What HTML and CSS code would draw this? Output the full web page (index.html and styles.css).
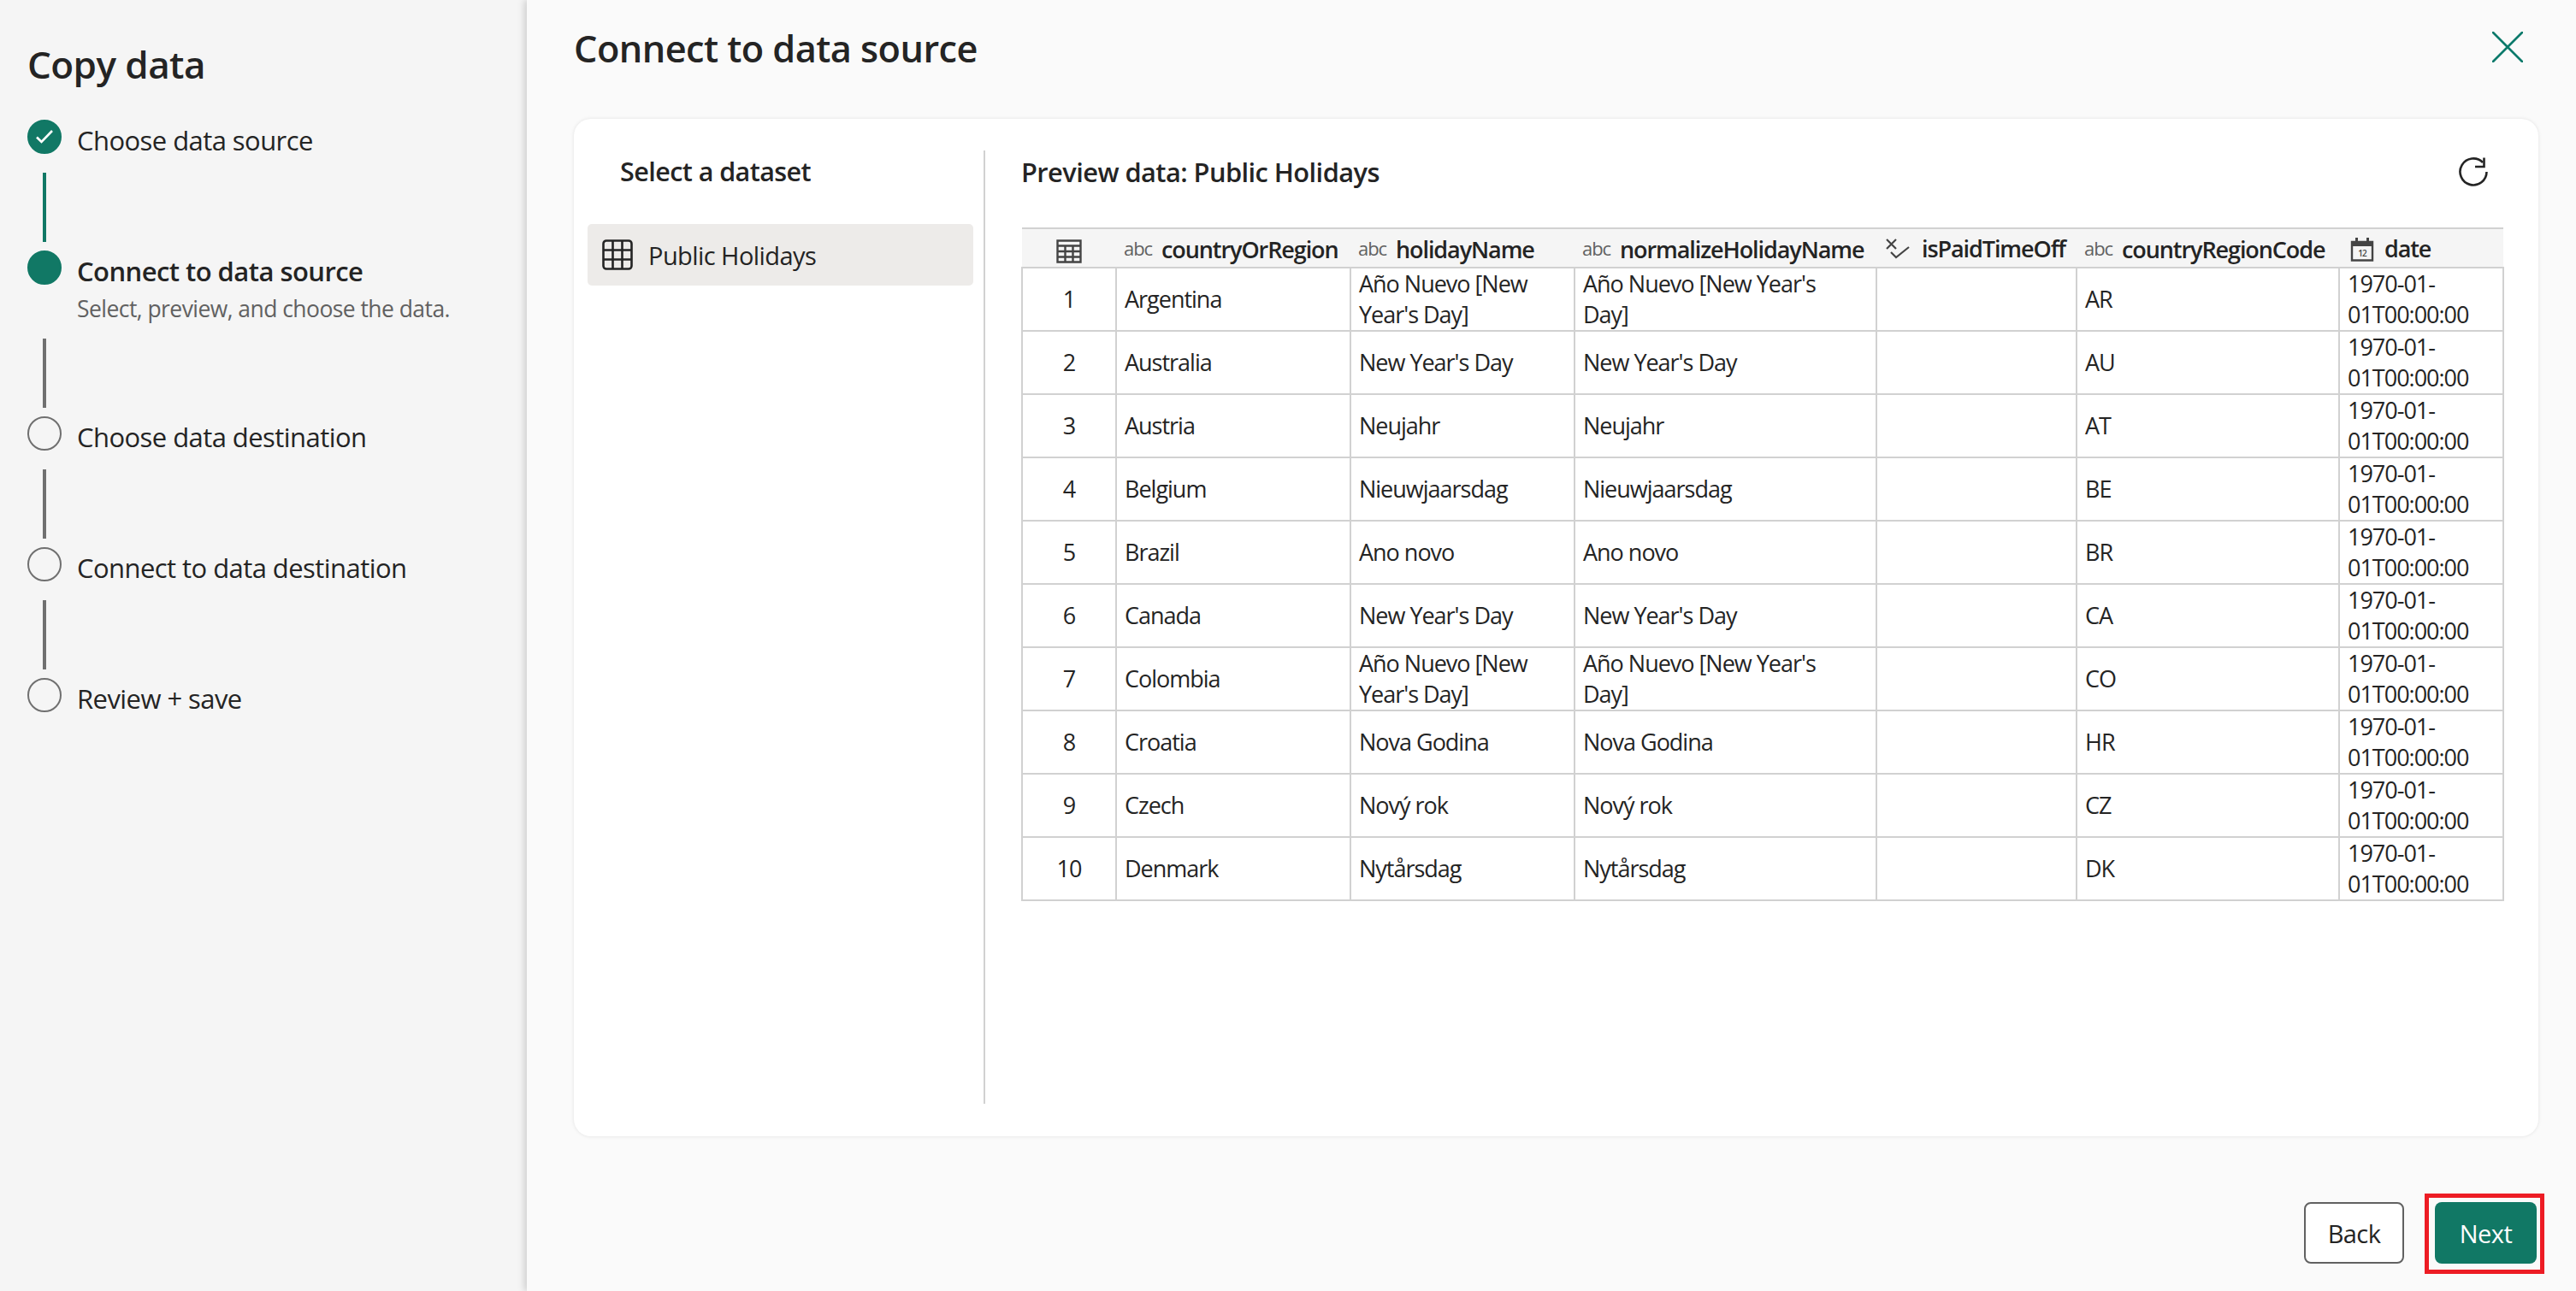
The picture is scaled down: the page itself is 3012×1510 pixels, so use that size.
FILE: index.html
```html
<!DOCTYPE html>
<html lang="en">
<head>
    <meta charset="UTF-8">
    <title>Copy data</title>
    <link rel="stylesheet" href="styles.css">
</head>
<body>
    <aside class="sidebar">
        <h1>Copy data</h1>
        <div class="step done">
            <div class="rail">
                <span class="dot">
                    <svg viewBox="0 0 24 24" width="24" height="24"><path d="M3 12.500l5.500 5.500L21 5" fill="none" stroke="#fff" stroke-width="2.600"/></svg>
                </span>
                <span class="line"></span>
            </div>
            <div class="step-text">Choose data source</div>
        </div>
        <div class="step current">
            <div class="rail">
                <span class="dot"></span>
                <span class="line"></span>
            </div>
            <div class="step-text">
                Connect to data source
                <p>Select, preview, and choose the data.</p>
            </div>
        </div>
        <div class="step">
            <div class="rail">
                <span class="dot"></span>
                <span class="line"></span>
            </div>
            <div class="step-text">Choose data destination</div>
        </div>
        <div class="step">
            <div class="rail">
                <span class="dot"></span>
                <span class="line"></span>
            </div>
            <div class="step-text">Connect to data destination</div>
        </div>
        <div class="step">
            <div class="rail">
                <span class="dot"></span>
            </div>
            <div class="step-text">Review + save</div>
        </div>
    </aside>

    <main class="main">
        <header class="top">
            <h2>Connect to data source</h2>
            <svg class="close" viewBox="0 0 36 36" width="36" height="36"><path d="M1 1l34 34M35 1L1 35" fill="none" stroke="#0c7a6b" stroke-width="2.6" stroke-linecap="round"/></svg>
        </header>

        <section class="card">
            <div class="datasets">
                <h3>Select a dataset</h3>
                <div class="dataset-item">
                    <svg viewBox="0 0 36 36" width="36" height="36"><path d="M5 1.500h26a3.500 3.500 0 0 1 3.500 3.500v26a3.500 3.500 0 0 1-3.500 3.500H5A3.500 3.500 0 0 1 1.500 31V5A3.500 3.500 0 0 1 5 1.500zM12.500 1.500v33M23.500 1.500v33M1.500 12.500h33M1.500 23.500h33" fill="none" stroke="#242424" stroke-width="2.600"/></svg>
                    <span>Public Holidays</span>
                </div>
            </div>

            <div class="preview">
                <div class="preview-head">
                    <h3>Preview data: Public Holidays</h3>
                    <svg class="refresh" viewBox="0 0 36 36" width="36" height="36"><path d="M33.500 18A15.500 15.500 0 1 1 29 7" fill="none" stroke="#242424" stroke-width="2.600"/><path d="M30.500 1.500v10.500H20" fill="none" stroke="#242424" stroke-width="2.600"/></svg>
                </div>
                <table class="grid">
                    <colgroup>
                        <col class="c-index"><col class="c-country"><col class="c-holiday"><col class="c-normal"><col class="c-paid"><col class="c-code"><col class="c-date">
                    </colgroup>
                    <thead>
                        <tr>
                            <th class="index">
                                <svg viewBox="0 0 30 28" width="30" height="28"><path d="M1.500 1.500h27v25h-27zM1.500 7.500h27M1.500 14h27M1.500 20.500h27M10.500 7.500v19M19.500 7.500v19" fill="none" stroke="#444" stroke-width="2.400"/></svg>
                            </th>
                            <th><span class="abc">abc</span>countryOrRegion</th>
                            <th><span class="abc">abc</span>holidayName</th>
                            <th><span class="abc">abc</span>normalizeHolidayName</th>
                            <th class="paid">
                                <svg viewBox="0 0 28 24" width="28" height="24"><path d="M1 1l11 11M12 1L1 12M6 16l6 6L27 10" fill="none" stroke="#444" stroke-width="2.200"/></svg>
                                isPaidTimeOff
                            </th>
                            <th><span class="abc">abc</span>countryRegionCode</th>
                            <th>
                                <svg class="cal" viewBox="0 0 28 28" width="28" height="28"><path d="M2 5h24v21.500H2z" fill="none" stroke="#444" stroke-width="2.400"/><path d="M1 4h26v6H1zM6 0h3v4H6zM19 0h3v4h-3z" fill="#444"/><text x="14" y="22" font-size="10" text-anchor="middle" fill="#444">12</text></svg>
                                date
                            </th>
                        </tr>
                    </thead>
                    <tbody>
                        <tr><td class="index">1</td><td>Argentina</td><td>Año Nuevo [New<br>Year's Day]</td><td>Año Nuevo [New Year's<br>Day]</td><td></td><td>AR</td><td>1970-01-<br>01T00:00:00</td></tr>
                        <tr><td class="index">2</td><td>Australia</td><td>New Year's Day</td><td>New Year's Day</td><td></td><td>AU</td><td>1970-01-<br>01T00:00:00</td></tr>
                        <tr><td class="index">3</td><td>Austria</td><td>Neujahr</td><td>Neujahr</td><td></td><td>AT</td><td>1970-01-<br>01T00:00:00</td></tr>
                        <tr><td class="index">4</td><td>Belgium</td><td>Nieuwjaarsdag</td><td>Nieuwjaarsdag</td><td></td><td>BE</td><td>1970-01-<br>01T00:00:00</td></tr>
                        <tr><td class="index">5</td><td>Brazil</td><td>Ano novo</td><td>Ano novo</td><td></td><td>BR</td><td>1970-01-<br>01T00:00:00</td></tr>
                        <tr><td class="index">6</td><td>Canada</td><td>New Year's Day</td><td>New Year's Day</td><td></td><td>CA</td><td>1970-01-<br>01T00:00:00</td></tr>
                        <tr><td class="index">7</td><td>Colombia</td><td>Año Nuevo [New<br>Year's Day]</td><td>Año Nuevo [New Year's<br>Day]</td><td></td><td>CO</td><td>1970-01-<br>01T00:00:00</td></tr>
                        <tr><td class="index">8</td><td>Croatia</td><td>Nova Godina</td><td>Nova Godina</td><td></td><td>HR</td><td>1970-01-<br>01T00:00:00</td></tr>
                        <tr><td class="index">9</td><td>Czech</td><td>Nový rok</td><td>Nový rok</td><td></td><td>CZ</td><td>1970-01-<br>01T00:00:00</td></tr>
                        <tr><td class="index">10</td><td>Denmark</td><td>Nytårsdag</td><td>Nytårsdag</td><td></td><td>DK</td><td>1970-01-<br>01T00:00:00</td></tr>
                    </tbody>
                </table>
            </div>
        </section>

        <footer class="actions">
            <button class="btn back">Back</button>
            <div class="highlight">
                <button class="btn primary">Next</button>
            </div>
        </footer>
    </main>
</body>
</html>
```

FILE: styles.css
```css
* {
    box-sizing: border-box;
}

html, body {
    height: 100%;
}

body {
    margin: 0;
    display: flex;
    overflow: hidden;
    background-color: #fafafa;
    color: #242424;
    font-family: "Open Sans", "Noto Sans", sans-serif;
    letter-spacing: -0.035em;
}

h1, h2, h3, p {
    margin: 0;
}

/* left wizard steps */
.sidebar {
    width: 616px;
    flex-shrink: 0;
    padding: 45px 0 0 32px;
    background-color: #f5f5f5;
}

.sidebar h1 {
    height: 95px;
    font-size: 44px;
    line-height: 60px;
    font-weight: 600;
}

.step {
    display: flex;
    gap: 18px;
}

.rail {
    width: 40px;
    display: flex;
    flex-direction: column;
    align-items: center;
}

.dot {
    width: 40px;
    height: 40px;
    border: 2px solid #707070;
    border-radius: 50%;
    display: flex;
    align-items: center;
    justify-content: center;
}

.line {
    width: 4px;
    height: 81px;
    margin: 22px 0 10px;
    background-color: #707070;
}

.step-text {
    padding-top: 3px;
    font-size: 31px;
    line-height: 42px;
}

.step-text p {
    margin-top: 6px;
    font-size: 26.500px;
    line-height: 34px;
    color: #616161;
}

.done .dot, .current .dot {
    background-color: #117865;
    border-color: #117865;
}

.done .line {
    background-color: #117865;
}

.current .step-text {
    font-weight: 600;
}

.current .step-text p {
    font-weight: 400;
}

.current .line {
    margin-top: 63px;
}

/* main area */
.main {
    flex: 1;
    min-width: 0;
    position: relative;
    padding: 0 44px 0 55px;
    background-color: #fafafa;
    box-shadow: -3px 0 8px rgba(0, 0, 0, 0.16);
}

.top {
    height: 139px;
    display: flex;
    justify-content: space-between;
    padding-top: 28px;
}

.top h2 {
    font-size: 43.300px;
    line-height: 58px;
    font-weight: 600;
}

.close {
    margin: 9px 18px 0 0;
}

.card {
    height: 1190px;
    display: flex;
    padding: 37px 0 38px;
    background-color: #fff;
    border-radius: 20px;
    box-shadow: 0 0 4px rgba(0, 0, 0, 0.1);
}

.datasets {
    width: 483px;
    padding-left: 16px;
    border-right: 2px solid #d1d1d1;
}

.datasets h3 {
    padding-left: 38px;
    font-size: 30.500px;
    line-height: 48px;
    font-weight: 600;
}

.dataset-item {
    width: 451px;
    height: 72px;
    margin-top: 38px;
    padding-left: 17px;
    display: flex;
    align-items: center;
    gap: 18px;
    background-color: #edebe9;
    border-radius: 5px;
    font-size: 29px;
}

.preview {
    flex: 1;
    padding: 0 40px 0 42px;
}

.preview-head {
    height: 50px;
    margin-bottom: 40px;
    display: flex;
    align-items: center;
    justify-content: space-between;
}

.preview-head h3 {
    font-size: 30.800px;
    font-weight: 600;
}

.refresh {
    margin-right: 18px;
}

/* data table */
.grid {
    width: 1732px;
    table-layout: fixed;
    border-collapse: collapse;
    font-size: 27px;
    line-height: 36px;
}

.c-index { width: 110px; }
.c-country { width: 274px; }
.c-holiday { width: 262px; }
.c-normal { width: 353px; }
.c-paid { width: 234px; }
.c-code { width: 307px; }
.c-date { width: 192px; }

.grid th, .grid td {
    border: 2px solid #d1d1d1;
    padding: 0 9px;
    text-align: left;
    white-space: nowrap;
}

.grid th {
    height: 46px;
    padding-top: 2px;
    background-color: #f5f5f5;
    border-left: none;
    border-right: none;
    font-weight: 600;
    letter-spacing: -0.04em;
}

.grid td {
    height: 74px;
    letter-spacing: -0.0375em;
}

.grid .index {
    text-align: center;
}

.grid th svg {
    vertical-align: middle;
}

.abc {
    margin-right: 11px;
    font-size: 22px;
    font-weight: 400;
    color: #616161;
    vertical-align: 3px;
}

.paid svg {
    margin: -6px 8px 0 2px;
}

.cal {
    margin: -4px 6px 0 4px;
}

/* bottom buttons */
.actions {
    height: 161px;
    margin-right: -7px;
    padding-top: 67px;
    display: flex;
    justify-content: flex-end;
    align-items: flex-start;
    gap: 24px;
}

.btn {
    width: 117px;
    height: 72px;
    background-color: #fff;
    color: #242424;
    border: 2px solid #616161;
    border-radius: 8px;
    font-family: inherit;
    font-size: 29px;
    letter-spacing: inherit;
}

.btn.back {
    margin-top: 10px;
}

.btn.primary {
    width: 119px;
    background-color: #117865;
    border: none;
    color: #fff;
}

.highlight {
    padding: 5px 4px 7px 7px;
    border: 5px solid #ed1c24;
}
```
